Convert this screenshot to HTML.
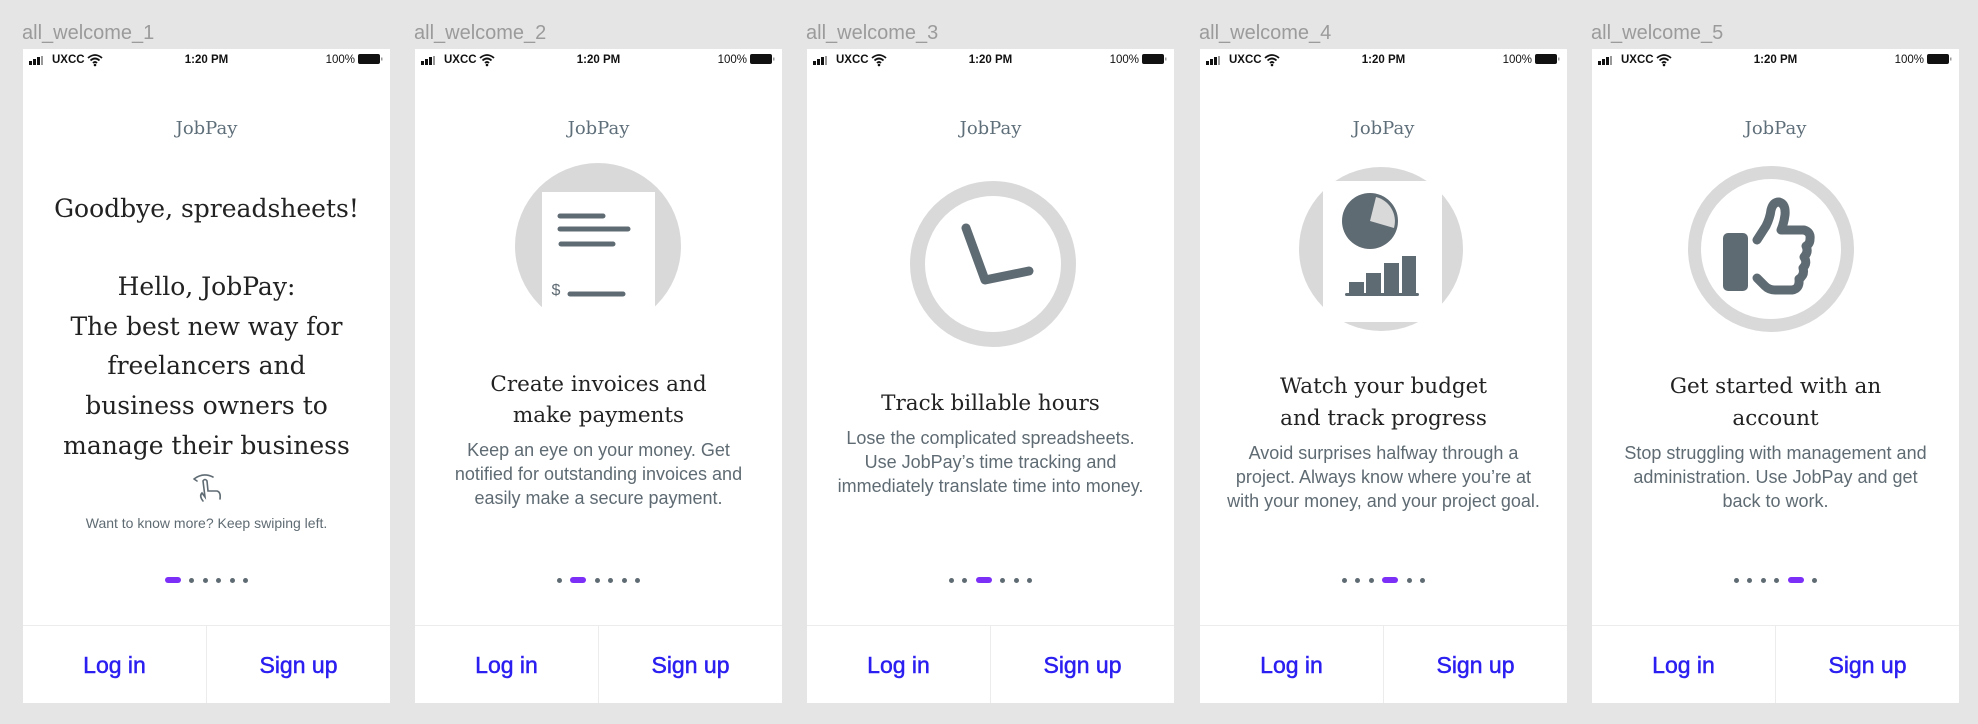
<!DOCTYPE html>
<html><head><meta charset="utf-8"><style>
*{margin:0;padding:0;box-sizing:border-box}
body{width:1978px;height:724px;background:#e5e5e5;position:relative;overflow:hidden;font-family:"Liberation Sans",sans-serif}
.lbl{position:absolute;top:20px;font-size:20px;color:#9b9b9b;line-height:26px}
.p{position:absolute;top:49px;width:367px;height:654px;background:#fff;overflow:hidden}
.t{position:absolute;left:0;width:100%;text-align:center;white-space:nowrap}
.sb{font-size:11.5px;font-weight:bold;color:#111;line-height:14px;top:4px}
.jp{font-family:"DejaVu Serif",serif;font-size:18px;color:#5f6f7a;line-height:24px}
.h{font-family:"DejaVu Serif",serif;font-size:25px;color:#222;line-height:34px}
.h2{font-family:"DejaVu Serif",serif;font-size:21.5px;color:#222;line-height:28px}
.b{font-size:18px;color:#5f6b73;line-height:22px}
.btns{position:absolute;left:0;top:576px;width:100%;height:78px;border-top:1px solid #ececec}
.btns div{position:absolute;top:0;height:78px;line-height:78px;text-align:center;font-size:23px;color:#2a1ef0;-webkit-text-stroke:0.5px #2a1ef0}
.btns .l{left:0;width:184px;border-right:1px solid #ececec}
.btns .r{left:184px;width:183px}
.dots{position:absolute;top:528px;left:0;width:100%;display:flex;justify-content:center;align-items:center;gap:8.5px}
.d{width:5px;height:5px;border-radius:50%;background:#5f6b73}
.a{width:16px;height:6px;border-radius:3px;background:#7b2ff7}
svg{position:absolute;left:0;top:0}
</style></head><body>

<div class="lbl" style="left:22px">all_welcome_1</div>
<div class="lbl" style="left:414px">all_welcome_2</div>
<div class="lbl" style="left:806px">all_welcome_3</div>
<div class="lbl" style="left:1199px">all_welcome_4</div>
<div class="lbl" style="left:1591px">all_welcome_5</div>

<!-- Panel 1 -->
<div class="p" style="left:23px">
<svg width="367" height="654">
<g fill="#111"><rect x="6" y="12" width="3" height="4"/><rect x="10" y="10" width="3" height="6"/><rect x="14" y="8" width="3" height="8"/><rect x="18" y="7" width="2" height="9" fill="#999"/></g>
<path d="M65 9 Q72 3 79 9 M67.5 11.5 Q72 7.5 76.5 11.5 M70 14 Q72 12 74 14" stroke="#111" stroke-width="1.8" fill="none"/><circle cx="72" cy="16" r="1.3" fill="#111"/>
<rect x="335" y="5" width="22" height="10" rx="2" fill="#111"/><rect x="358" y="8.5" width="1.5" height="3" fill="#999"/>
<g stroke="#5f6b73" stroke-width="1.6" fill="none" stroke-linecap="round"><path d="M171 430 Q180 423 190 428 M171 430 l3 -2 M171 430 l3 2"/><path d="M180 452 Q176 447 179 444 L182 448 L180 432 Q182 429 184 432 L185 442 L194 442 Q198 443 197 450"/></g>
</svg>
<div class="t sb" style="left:29px;width:auto;text-align:left">UXCC</div>
<div class="t sb" style="left:0">1:20 PM</div>
<div class="t sb" style="left:297px;width:35px;text-align:right;font-weight:normal">100%</div>
<div class="t jp" style="top:68px">JobPay</div>
<div class="t h" style="top:143px">Goodbye, spreadsheets!</div>
<div class="t h" style="top:221px">Hello, JobPay:</div>
<div class="t h" style="top:261px">The best new way for</div>
<div class="t h" style="top:300px">freelancers and</div>
<div class="t h" style="top:340px">business owners to</div>
<div class="t h" style="top:380px">manage their business</div>
<div class="t" style="top:466px;font-size:14px;color:#5f6b73">Want to know more? Keep swiping left.</div>
<div class="dots"><div class="a"></div><div class="d"></div><div class="d"></div><div class="d"></div><div class="d"></div><div class="d"></div></div>
<div class="btns"><div class="l">Log in</div><div class="r">Sign up</div></div>
</div>

<!-- Panel 2 -->
<div class="p" style="left:415px">
<svg width="367" height="654">
<g fill="#111"><rect x="6" y="12" width="3" height="4"/><rect x="10" y="10" width="3" height="6"/><rect x="14" y="8" width="3" height="8"/><rect x="18" y="7" width="2" height="9" fill="#999"/></g>
<path d="M65 9 Q72 3 79 9 M67.5 11.5 Q72 7.5 76.5 11.5 M70 14 Q72 12 74 14" stroke="#111" stroke-width="1.8" fill="none"/><circle cx="72" cy="16" r="1.3" fill="#111"/>
<rect x="335" y="5" width="22" height="10" rx="2" fill="#111"/><rect x="358" y="8.5" width="1.5" height="3" fill="#999"/>
<clipPath id="c2"><rect x="0" y="0" width="367" height="258"/></clipPath>
<circle cx="183" cy="197" r="83" fill="#d9d9d9" clip-path="url(#c2)"/>
<rect x="127" y="143" width="113" height="115" fill="#fff"/>
<g stroke="#5f6b73" stroke-width="5" stroke-linecap="round"><line x1="145" y1="167" x2="188" y2="167"/><line x1="145" y1="180" x2="213" y2="180"/><line x1="146" y1="195" x2="198" y2="195"/><line x1="155" y1="245" x2="208" y2="245"/></g>
<text x="141" y="246" font-family="Liberation Sans" font-size="16" fill="#5f6b73" text-anchor="middle">$</text>
</svg>
<div class="t sb" style="left:29px;width:auto;text-align:left">UXCC</div>
<div class="t sb" style="left:0">1:20 PM</div>
<div class="t sb" style="left:297px;width:35px;text-align:right;font-weight:normal">100%</div>
<div class="t jp" style="top:68px">JobPay</div>
<div class="t h2" style="top:322px">Create invoices and</div>
<div class="t h2" style="top:353px">make payments</div>
<div class="t b" style="top:390px">Keep an eye on your money. Get</div>
<div class="t b" style="top:414px">notified for outstanding invoices and</div>
<div class="t b" style="top:438px">easily make a secure payment.</div>
<div class="dots"><div class="d"></div><div class="a"></div><div class="d"></div><div class="d"></div><div class="d"></div><div class="d"></div></div>
<div class="btns"><div class="l">Log in</div><div class="r">Sign up</div></div>
</div>

<!-- Panel 3 -->
<div class="p" style="left:807px">
<svg width="367" height="654">
<g fill="#111"><rect x="6" y="12" width="3" height="4"/><rect x="10" y="10" width="3" height="6"/><rect x="14" y="8" width="3" height="8"/><rect x="18" y="7" width="2" height="9" fill="#999"/></g>
<path d="M65 9 Q72 3 79 9 M67.5 11.5 Q72 7.5 76.5 11.5 M70 14 Q72 12 74 14" stroke="#111" stroke-width="1.8" fill="none"/><circle cx="72" cy="16" r="1.3" fill="#111"/>
<rect x="335" y="5" width="22" height="10" rx="2" fill="#111"/><rect x="358" y="8.5" width="1.5" height="3" fill="#999"/>
<circle cx="186" cy="215" r="75.5" fill="none" stroke="#d9d9d9" stroke-width="15"/>
<path d="M159 179 L178 231 L222 222" fill="none" stroke="#5f6b73" stroke-width="9" stroke-linecap="round" stroke-linejoin="round"/>
</svg>
<div class="t sb" style="left:29px;width:auto;text-align:left">UXCC</div>
<div class="t sb" style="left:0">1:20 PM</div>
<div class="t sb" style="left:297px;width:35px;text-align:right;font-weight:normal">100%</div>
<div class="t jp" style="top:68px">JobPay</div>
<div class="t h2" style="top:341px">Track billable hours</div>
<div class="t b" style="top:378px">Lose the complicated spreadsheets.</div>
<div class="t b" style="top:402px">Use JobPay’s time tracking and</div>
<div class="t b" style="top:426px">immediately translate time into money.</div>
<div class="dots"><div class="d"></div><div class="d"></div><div class="a"></div><div class="d"></div><div class="d"></div><div class="d"></div></div>
<div class="btns"><div class="l">Log in</div><div class="r">Sign up</div></div>
</div>

<!-- Panel 4 -->
<div class="p" style="left:1200px">
<svg width="367" height="654">
<g fill="#111"><rect x="6" y="12" width="3" height="4"/><rect x="10" y="10" width="3" height="6"/><rect x="14" y="8" width="3" height="8"/><rect x="18" y="7" width="2" height="9" fill="#999"/></g>
<path d="M65 9 Q72 3 79 9 M67.5 11.5 Q72 7.5 76.5 11.5 M70 14 Q72 12 74 14" stroke="#111" stroke-width="1.8" fill="none"/><circle cx="72" cy="16" r="1.3" fill="#111"/>
<rect x="335" y="5" width="22" height="10" rx="2" fill="#111"/><rect x="358" y="8.5" width="1.5" height="3" fill="#999"/>
<circle cx="181" cy="200" r="82" fill="#d9d9d9"/>
<rect x="123" y="132" width="119" height="141" fill="#fff"/>
<circle cx="170" cy="172" r="28" fill="#5f6b73"/>
<path d="M170 172 L176 148 A25 25 0 0 1 194 179 Z" fill="#d9d9d9"/>
<g fill="#5f6b73"><rect x="149" y="233" width="15" height="12"/><rect x="166" y="224" width="15" height="21"/><rect x="184" y="214" width="15" height="31"/><rect x="202" y="207" width="14" height="38"/><rect x="145" y="244" width="74" height="3" rx="1.5"/></g>
</svg>
<div class="t sb" style="left:29px;width:auto;text-align:left">UXCC</div>
<div class="t sb" style="left:0">1:20 PM</div>
<div class="t sb" style="left:297px;width:35px;text-align:right;font-weight:normal">100%</div>
<div class="t jp" style="top:68px">JobPay</div>
<div class="t h2" style="top:324px">Watch your budget</div>
<div class="t h2" style="top:356px">and track progress</div>
<div class="t b" style="top:393px">Avoid surprises halfway through a</div>
<div class="t b" style="top:417px">project. Always know where you’re at</div>
<div class="t b" style="top:441px">with your money, and your project goal.</div>
<div class="dots"><div class="d"></div><div class="d"></div><div class="d"></div><div class="a"></div><div class="d"></div><div class="d"></div></div>
<div class="btns"><div class="l">Log in</div><div class="r">Sign up</div></div>
</div>

<!-- Panel 5 -->
<div class="p" style="left:1592px">
<svg width="367" height="654">
<g fill="#111"><rect x="6" y="12" width="3" height="4"/><rect x="10" y="10" width="3" height="6"/><rect x="14" y="8" width="3" height="8"/><rect x="18" y="7" width="2" height="9" fill="#999"/></g>
<path d="M65 9 Q72 3 79 9 M67.5 11.5 Q72 7.5 76.5 11.5 M70 14 Q72 12 74 14" stroke="#111" stroke-width="1.8" fill="none"/><circle cx="72" cy="16" r="1.3" fill="#111"/>
<rect x="335" y="5" width="22" height="10" rx="2" fill="#111"/><rect x="358" y="8.5" width="1.5" height="3" fill="#999"/>
<circle cx="179" cy="200" r="76.5" fill="none" stroke="#d9d9d9" stroke-width="13"/>
<rect x="131" y="184" width="25" height="58" rx="5" fill="#5f6b73"/>
<path d="M165 191 L174 177 Q178 169 179 161 Q181 153 187 153 Q194 155 193 166 Q192 174 189 181 L212 181 Q219 183 218 190 Q218 195 214 197 Q217 203 212 208 Q216 214 211 219 Q213 226 207 230 Q208 240 200 241 L183 241 Q177 241 173 237 L165 229" fill="none" stroke="#5f6b73" stroke-width="9" stroke-linecap="round" stroke-linejoin="round"/>
</svg>
<div class="t sb" style="left:29px;width:auto;text-align:left">UXCC</div>
<div class="t sb" style="left:0">1:20 PM</div>
<div class="t sb" style="left:297px;width:35px;text-align:right;font-weight:normal">100%</div>
<div class="t jp" style="top:68px">JobPay</div>
<div class="t h2" style="top:324px">Get started with an</div>
<div class="t h2" style="top:356px">account</div>
<div class="t b" style="top:393px">Stop struggling with management and</div>
<div class="t b" style="top:417px">administration. Use JobPay and get</div>
<div class="t b" style="top:441px">back to work.</div>
<div class="dots"><div class="d"></div><div class="d"></div><div class="d"></div><div class="d"></div><div class="a"></div><div class="d"></div></div>
<div class="btns"><div class="l">Log in</div><div class="r">Sign up</div></div>
</div>

</body></html>
